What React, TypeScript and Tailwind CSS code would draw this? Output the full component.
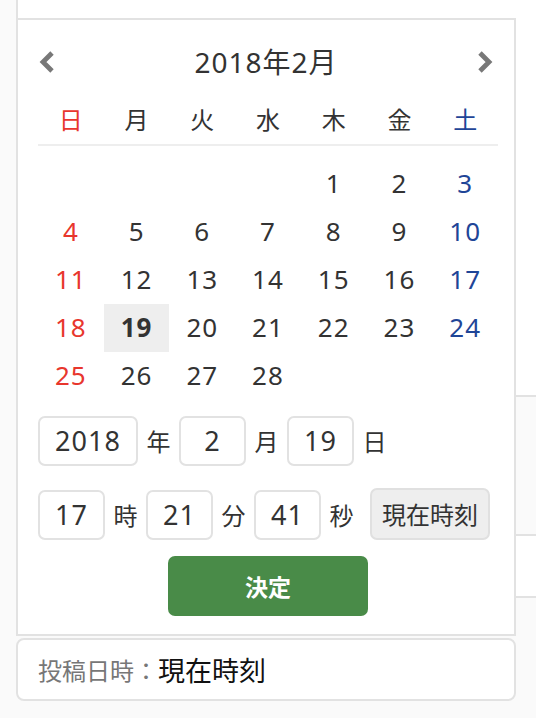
import React from "react";

const WEEKDAYS = ["日", "月", "火", "水", "木", "金", "土"];

const WEEKS: (number | null)[][] = [
  [null, null, null, null, 1, 2, 3],
  [4, 5, 6, 7, 8, 9, 10],
  [11, 12, 13, 14, 15, 16, 17],
  [18, 19, 20, 21, 22, 23, 24],
  [25, 26, 27, 28, null, null, null],
];

const SELECTED = 19;

function dayColor(col: number) {
  if (col === 0) return "text-[#e8362d]";
  if (col === 6) return "text-[#1f4597]";
  return "text-[#333333]";
}

function Chevron({ dir }: { dir: "left" | "right" }) {
  return (
    <svg width="16" height="22" viewBox="0 0 16 22" className="shrink-0">
      <path
        d={dir === "left" ? "M13 2 L4 11 L13 20" : "M3 2 L12 11 L3 20"}
        fill="none"
        stroke="#787878"
        strokeWidth="4.8"
        strokeLinejoin="miter"
      />
    </svg>
  );
}

function Field({ value, wide }: { value: string; wide?: boolean }) {
  return (
    <div
      className={`${wide ? "w-[100px]" : "w-[67px]"} h-[50px] shrink-0 rounded-[7px] border-2 border-[#e2e2e2] bg-white flex items-center justify-center pb-[2px] font-['Noto_Sans','Noto_Sans_CJK_JP',sans-serif] text-[27px] leading-none tracking-[1px] text-[#333333]`}
    >
      {value}
    </div>
  );
}

function Unit({ children }: { children: React.ReactNode }) {
  return (
    <span className="mx-[8.5px] w-6 shrink-0 text-center text-[24px] leading-none text-[#333333]">
      {children}
    </span>
  );
}

export default function App() {
  return (
    <div className="w-[536px] h-[718px] overflow-hidden bg-[#fafafa] flex font-['Noto_Sans_CJK_JP','Noto_Sans',sans-serif]">
      {/* left gutter */}
      <div className="w-4 shrink-0" />

      <div className="flex-1 flex flex-col">
        {/* row above the picker */}
        <div className="h-[18px] bg-white border-l-2 border-[#e2e2e2]" />

        <div className="flex">
          {/* date picker */}
          <div className="w-[500px] h-[618px] shrink-0 border-2 border-[#e2e2e2] bg-white pl-5 pr-4 pt-[14px] flex flex-col">
            <div className="h-[56px] flex items-center justify-between pl-[1px] pr-[5px]">
              <Chevron dir="left" />
              <div className="font-['Noto_Sans','Noto_Sans_CJK_JP',sans-serif] text-[28px] leading-none tracking-[1px] text-[#333333]">
                2018年2月
              </div>
              <Chevron dir="right" />
            </div>

            <div className="mt-2 h-[48px] pb-1 grid grid-cols-7 border-b-2 border-[#eeeeee]">
              {WEEKDAYS.map((w, i) => (
                <div
                  key={w}
                  className={`flex items-center justify-center text-[24px] leading-none ${dayColor(i)}`}
                >
                  {w}
                </div>
              ))}
            </div>

            <div className="mt-[14px] grid grid-cols-7">
              {WEEKS.flatMap((week, r) =>
                week.map((d, c) => (
                  <div
                    key={`${r}-${c}`}
                    className={`h-12 flex items-center justify-center pb-[3px] font-['Noto_Sans','Noto_Sans_CJK_JP',sans-serif] text-[26px] leading-none tracking-[1px] ${dayColor(c)} ${
                      d === SELECTED ? "bg-[#eeeeee] font-bold" : ""
                    }`}
                  >
                    {d ?? ""}
                  </div>
                ))
              )}
            </div>

            <div className="mt-4 flex items-center">
              <Field value="2018" wide />
              <Unit>年</Unit>
              <Field value="2" />
              <Unit>月</Unit>
              <Field value="19" />
              <Unit>日</Unit>
            </div>

            <div className="mt-6 flex items-center">
              <Field value="17" />
              <Unit>時</Unit>
              <Field value="21" />
              <Unit>分</Unit>
              <Field value="41" />
              <Unit>秒</Unit>
              <button className="ml-2 -mt-[2px] w-[120px] h-[52px] rounded-[7px] border-2 border-[#e0e0e0] bg-[#eeeeee] text-[24px] leading-none text-[#333333] flex items-center justify-center">
                現在時刻
              </button>
            </div>

            <div className="mt-4 flex justify-center">
              <button className="w-[200px] h-[60px] rounded-[7px] bg-[#498b48] text-white text-[23px] font-bold leading-none flex items-center justify-center">
                決定
              </button>
            </div>
          </div>

          {/* rows of the form behind the picker */}
          <div className="flex-1 flex flex-col">
            <div className="h-[377px] bg-white" />
            <div className="h-[139px] border-t-2 border-[#e2e2e2] bg-[#fafafa]" />
            <div className="h-[62px] border-t-2 border-[#e2e2e2] bg-white" />
            <div className="flex-1 border-t-2 border-[#e2e2e2] bg-[#fafafa]" />
          </div>
        </div>

        {/* posting date field */}
        <div className="mt-[2px] w-[500px] h-[63px] rounded-lg border-2 border-[#e2e2e2] bg-white pl-5 flex items-center">
          <span className="text-[24px] leading-none text-[#777777]">投稿日時：</span>
          <span className="text-[27px] leading-none text-[#111111]">現在時刻</span>
        </div>
      </div>
    </div>
  );
}
